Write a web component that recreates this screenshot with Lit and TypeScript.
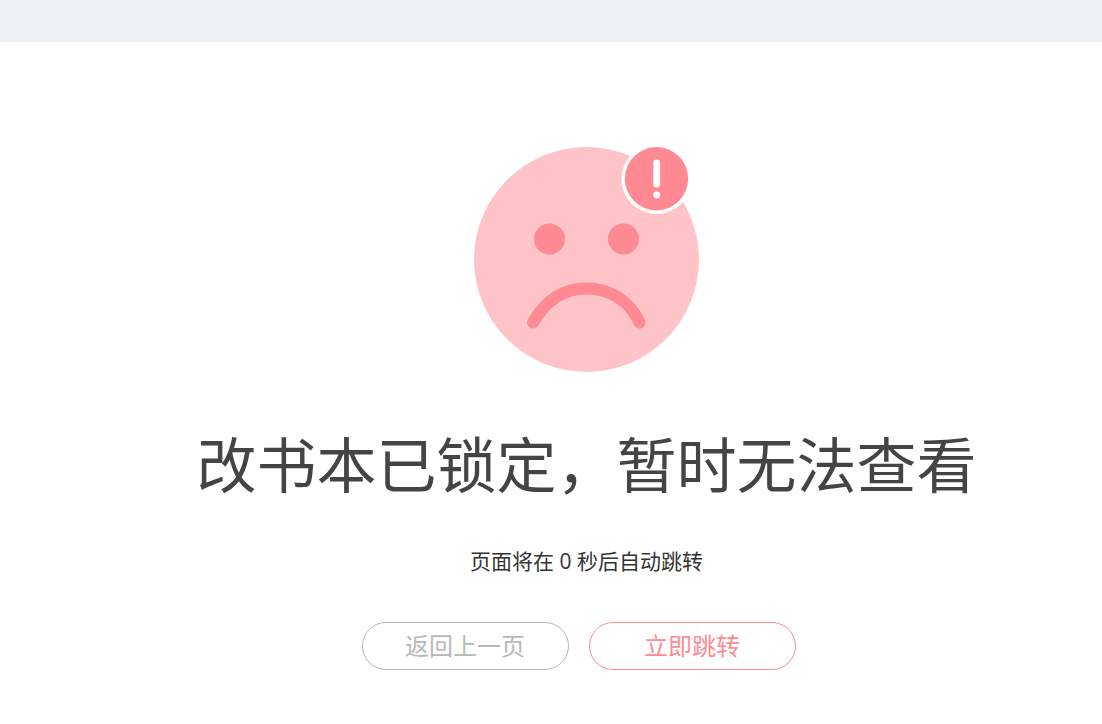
import { LitElement, html, css } from "lit";
import { customElement, property } from "lit/decorators.js";

@customElement("sad-face")
class SadFace extends LitElement {
  static styles = css`
    :host { display: block; }
    svg { display: block; width: 225px; height: 225px; }
    .face { fill: #ffc4c8; }
    .feature { fill: #ff8a93; }
    .mouth { fill: none; stroke: #ff8a93; stroke-width: 12; stroke-linecap: round; }
    .ring { fill: #fff; }
    .mark { fill: none; stroke: #fff; stroke-width: 6.8; stroke-linecap: round; }
  `;

  render() {
    return html`
      <svg viewBox="0 0 225 225" aria-hidden="true">
        <circle class="face" cx="112.5" cy="112.5" r="112.5" />
        <circle class="feature" cx="75.5" cy="92" r="15.5" />
        <circle class="feature" cx="149.5" cy="92" r="15.5" />
        <path class="mouth" d="M59 175.500C72 153 90 141.500 112.500 141.500C136 141.500 156 154 165.500 175.500" />
        <circle class="ring" cx="182.500" cy="32" r="35" />
        <circle class="feature" cx="182.500" cy="31.700" r="31.700" />
        <path class="mark" d="M182.700 15.800V37" />
        <circle class="ring" cx="182.700" cy="48" r="3.400" />
      </svg>
    `;
  }
}

@customElement("app-root")
class AppRoot extends LitElement {
  @property({ type: Number }) seconds = 0;

  static styles = css`
    :host {
      display: block;
      min-height: 100vh;
      background: #fff;
      font-family: "Open Sans", "Noto Sans CJK SC", sans-serif;
    }
    .bar { height: 42px; background: #ebf0f3; }
    .notice {
      display: flex;
      flex-direction: column;
      align-items: center;
      padding: 105px 0 48px 71px;
    }
    .title {
      margin: 46px 0 0;
      font-size: 60px;
      line-height: 88px;
      font-weight: 400;
      color: #444;
      text-align: center;
      font-family: "Noto Sans CJK SC", sans-serif;
    }
    .countdown {
      margin: 39px 0 0;
      font-size: 21px;
      line-height: 32px;
      font-weight: 400;
      color: #333;
    }
    .actions { display: flex; gap: 20px; margin-top: 45px; padding-right: 16px; }
    .button {
      box-sizing: border-box;
      width: 207px;
      height: 48px;
      padding: 0;
      border: 1px solid currentColor;
      border-radius: 24px;
      background: #fff;
      font: inherit;
      font-size: 24px;
      line-height: 46px;
      cursor: pointer;
    }
    .back { color: #b8b8b8; }
    .go { color: #ff8a93; }
  `;

  render() {
    return html`
      <header class="bar"></header>
      <main class="notice">
        <sad-face></sad-face>
        <h1 class="title">改书本已锁定，暂时无法查看</h1>
        <p class="countdown">页面将在 ${this.seconds} 秒后自动跳转</p>
        <div class="actions">
          <button class="button back" type="button">返回上一页</button>
          <button class="button go" type="button">立即跳转</button>
        </div>
      </main>
    `;
  }
}
